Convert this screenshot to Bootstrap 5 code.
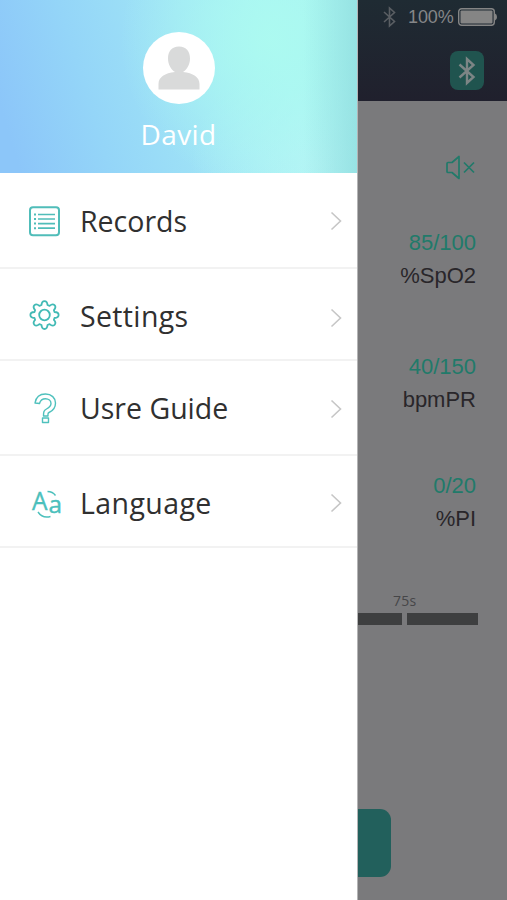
<!DOCTYPE html>
<html lang="en">
<head>
<meta charset="utf-8">
<meta name="viewport" content="width=device-width, initial-scale=1">
<title>Oximeter menu</title>
<link href="https://cdn.jsdelivr.net/npm/bootstrap@5.3.0/dist/css/bootstrap.min.css" rel="stylesheet">
<style>
body{font-family:"Open Sans","Noto Sans",sans-serif;background:#7a7a7c}
.screen{height:900px;width:507px}
.drawer{width:358px;background:#fff;border-right:1px solid #b4b4b5}
.profile{height:173px;padding-top:32px;color:#fff;
 background:linear-gradient(90deg,rgba(145,225,225,0) 85%,rgba(145,222,224,.8) 100%),
 radial-gradient(ellipse 150px 150px at 270px 40px,rgba(172,250,240,.95) 0,rgba(172,250,240,0) 100%),
 radial-gradient(ellipse 130px 110px at 320px 165px,rgba(182,244,245,.9) 0,rgba(182,244,245,0) 100%),
 linear-gradient(73deg,#8cc6f9 5%,#94d5f8 27%,#9fe3f6 52%,#a8f4f5 77%,#a8f3ef 100%)}
.avatar{width:72px;height:72px}
.username{font-size:28px;line-height:38px;margin-top:11px;letter-spacing:.35px}
.menu-row{border:0!important;border-bottom:2px solid #f2f2f2!important;border-radius:0!important;padding:0 15.500px 0 26px;color:#303030;background:#fff}
.menu-row svg{flex:none;overflow:visible}
.menu-label{font-size:28.5px;line-height:40px;margin-left:17px;white-space:nowrap}
.r1{height:96px;padding-top:2px}
.r2{height:92px;padding-top:4px}
.r2 .menu-label{letter-spacing:.35px}
.r2 svg:first-child{margin-top:-3px}
.r2 svg:last-child,.r3 svg:last-child{margin-top:3px}
.r3{height:95px}
.r4{height:92px;padding-top:4px}
.r4 .menu-label{letter-spacing:.4px}
.r4 svg:last-child{margin-top:-1px}
.device{font-family:"Liberation Sans",Arial,sans-serif;background:#7a7a7c}
.topbar{height:101px;background:linear-gradient(#1f2b33,#20202d);color:#858688}
.status{height:34px;padding:0 9px 0 25px}
.pct{font-size:18px;line-height:20px;margin-left:12px;margin-right:4px;letter-spacing:-.1px}
.bt-btn{width:34px;height:39px;border-radius:8px;background:#20544f;margin:17px 23px 0 auto}
.mute{padding:53px 26px 0 0;height:125px}
.reading{font-size:22px;line-height:33px;padding-right:31px;color:#29262a}
.limit{color:#217a6a}
.rd1{height:124px}
.rd2{height:119px}
.rd3{height:121px}
.time{font-family:"Open Sans",sans-serif;font-size:14px;line-height:21px;color:#464648;padding-left:35px;height:23px;letter-spacing:.2px}
.track{height:12px;gap:5px}
.track div{background:#3e3f40}
.seg-a{width:44px}
.seg-b{width:71px}
.action{width:33px;height:68px;margin-top:184px;border-radius:0 11px 11px 0;background:#22605c}
</style>
<script src="https://cdn.jsdelivr.net/npm/bootstrap@5.3.0/dist/js/bootstrap.bundle.min.js"></script>
</head>
<body>
<div class="screen d-flex overflow-hidden">
 <aside class="drawer flex-shrink-0">
  <header class="profile d-flex flex-column align-items-center">
   <svg class="avatar flex-shrink-0" viewBox="0 0 72 72"><circle cx="36" cy="36" r="36" fill="#fff"/><path fill="#d9dada" d="M36 14.500c7.500 0 11 5 11 12 0 6-3 11-7 13.500 10 1 16.500 5 16.500 12v5.500h-41V52c0-7 6.500-11 16.500-12-4-2.500-7-7.500-7-13.500 0-7 3.500-12 11-12Z"/></svg>
   <div class="username">David</div>
  </header>
  <nav class="list-group list-group-flush">
   <a href="#" class="list-group-item menu-row r1 d-flex align-items-center">
    <svg width="37" height="36" viewBox="0 0 37 36" fill="none" stroke="#50bdb9"><rect x="4" y="4.200" width="29" height="28" rx="3" stroke-width="2"/><path stroke-width="1.700" d="M12 11.500h17M12 16h17M12 20.600h17M12 25.200h17"/><path stroke-width="2" d="M8 11.500h2M8 16h2M8 20.600h2M8 25.200h2"/></svg>
    <span class="menu-label">Records</span>
    <svg class="ms-auto" width="12" height="20" viewBox="0 0 12 20" fill="none" stroke="#c6c6c6" stroke-width="1.600"><path d="m1.500 1.500 9 8.500-9 8.500"/></svg>
   </a>
   <a href="#" class="list-group-item menu-row r2 d-flex align-items-center">
    <svg width="37" height="36" viewBox="0 0 37 36" fill="none" stroke="#42bab5" stroke-width="1.800"><circle cx="18.500" cy="18" r="5.300"/><path stroke-linejoin="round" d="M15.500 8c.3-5.300 5.700-5.300 6 0l2.100.9c4-3.500 7.800.3 4.300 4.300l.6 1.800c5.500.3 5.500 5.700 0 6l-.6 1.800c3.500 4-.3 7.800-4.300 4.300l-2.100.9c-.3 5.300-5.700 5.300-6 0l-2.100-.9c-4 3.500-7.800-.3-4.300-4.300L8.500 21c-5.500-.3-5.500-5.700 0-6l.6-1.800c-3.500-4 .3-7.800 4.300-4.300Z"/></svg>
    <span class="menu-label">Settings</span>
    <svg class="ms-auto" width="12" height="20" viewBox="0 0 12 20" fill="none" stroke="#c6c6c6" stroke-width="1.600"><path d="m1.500 1.500 9 8.500-9 8.500"/></svg>
   </a>
   <a href="#" class="list-group-item menu-row r3 d-flex align-items-center">
    <svg width="37" height="36" viewBox="0 0 37 36" fill="none" stroke="#4fc1bd" stroke-width="1.400" stroke-linejoin="round"><path d="M9 13C10 7 14 4 19.500 4 25.500 4 29.500 8 29.500 13c0 5-3 8-6.500 9.500-1.500.7-1 1.500-1 3.500h-4.500c0-4 .3-5.500 3-7 2.800-1.500 4.500-2.800 4.500-5.500S22.500 8.800 19.500 8.800s-5 1.200-6 4.700Z"/><rect x="16.500" y="28" width="6" height="4.500"/></svg>
    <span class="menu-label">Usre Guide</span>
    <svg class="ms-auto" width="12" height="20" viewBox="0 0 12 20" fill="none" stroke="#c6c6c6" stroke-width="1.600"><path d="m1.500 1.500 9 8.500-9 8.500"/></svg>
   </a>
   <a href="#" class="list-group-item menu-row r4 d-flex align-items-center">
    <svg width="37" height="36" viewBox="0 0 37 36" fill="#4bc0bc"><text x="6" y="25" font-family="Open Sans" font-size="26" stroke="#4bc0bc" stroke-width=".4" textLength="15.500" lengthAdjust="spacingAndGlyphs">A</text><text x="22.500" y="27.500" font-family="Open Sans" font-size="23" stroke="#4bc0bc" stroke-width=".4" textLength="13.500" lengthAdjust="spacingAndGlyphs">a</text><path fill="none" stroke="#4bc0bc" stroke-width="1.400" d="M21.500 6.500c4 0 6 1.200 8 4M12 27c3 4.500 7 6 12.500 4.500"/></svg>
    <span class="menu-label">Language</span>
    <svg class="ms-auto" width="12" height="20" viewBox="0 0 12 20" fill="none" stroke="#c6c6c6" stroke-width="1.600"><path d="m1.500 1.500 9 8.500-9 8.500"/></svg>
   </a>
  </nav>
 </aside>
 <main class="device flex-grow-1">
  <div class="topbar">
   <div class="status d-flex align-items-center">
    <svg width="13" height="22" viewBox="0 0 13 22" fill="none" stroke="#5a5e63" stroke-width="1.600"><path d="m1 6 10.500 9.500L6.500 20V2l5 4.500L1 16"/></svg>
    <span class="pct">100%</span>
    <svg width="39" height="18" viewBox="0 0 39 18"><rect x=".7" y=".7" width="35.600" height="16.600" rx="3" fill="none" stroke="#858585" stroke-width="1.400"/><rect x="2.500" y="2.500" width="32" height="13" rx="1" fill="#858585"/><path fill="#858585" d="M37 5.500q2 .5 2 3.500t-2 3.500Z"/></svg>
   </div>
   <div class="bt-btn d-flex align-items-center justify-content-center">
    <svg width="18" height="30" viewBox="0 0 18 30" fill="none" stroke="#7c8585" stroke-width="2.400"><path d="m1.500 8.500 14 12.500L9 27V3l6.500 6L1.500 21.500"/></svg>
   </div>
  </div>
  <div class="mute d-flex justify-content-end">
   <svg width="39" height="28" viewBox="0 0 39 28" fill="none" stroke="#217a6a" stroke-width="1.700"><path stroke-linejoin="round" d="M6 8.500h4l7-6v22l-7-6H6q-1 0-1-1v-8q0-1 1-1Z"/><path d="m22 8.500 10 10M32 8.500l-10 10"/></svg>
  </div>
  <div class="reading text-end rd1"><div class="limit">85/100</div><div>%SpO2</div></div>
  <div class="reading text-end rd2"><div class="limit">40/150</div><div>bpmPR</div></div>
  <div class="reading text-end rd3"><div class="limit">0/20</div><div>%PI</div></div>
  <div class="time">75s</div>
  <div class="track d-flex"><div class="seg-a"></div><div class="seg-b"></div></div>
  <div class="action"></div>
 </main>
</div>
</body>
</html>
